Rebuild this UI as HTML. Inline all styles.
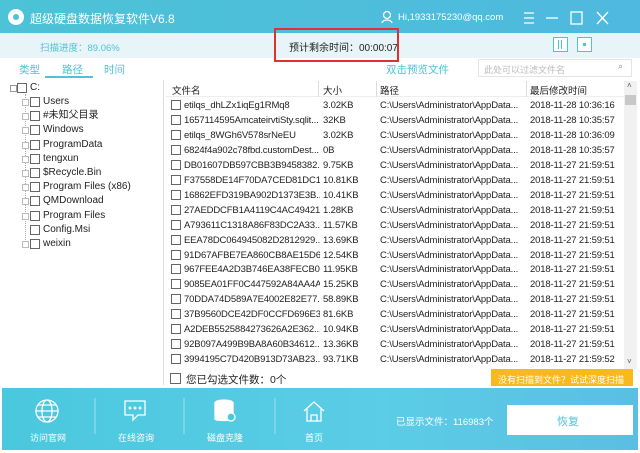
<!DOCTYPE html>
<html><head><meta charset="utf-8"><style>
*{margin:0;padding:0;box-sizing:border-box}
body{width:640px;height:453px;overflow:hidden;background:#fff;font-family:"Liberation Sans","Noto Sans CJK SC",sans-serif;font-size:11px;color:#222;position:relative}
.a{position:absolute;white-space:nowrap}
.cb{position:absolute;width:10px;height:10px;border:1px solid #666;background:#fff}
.row{position:absolute;left:168px;height:15px;width:456px;font-size:9.5px;line-height:15px;white-space:nowrap;letter-spacing:-0.15px}
.row span{position:absolute;overflow:hidden;white-space:nowrap}
.t{position:absolute;font-size:10px;line-height:14px;white-space:nowrap}
</style></head><body>
<div class="a" style="left:0;top:0;width:640px;height:33px;background:linear-gradient(90deg,#4cc3d6,#4fb9df)"></div>
<div class="a" style="left:8px;top:9px;width:16px;height:16px;border-radius:50%;background:#fff"></div>
<div class="a" style="left:13px;top:14px;width:6px;height:6px;border-radius:50%;background:#4cc3d6"></div>
<div class="a" style="left:30px;top:10px;color:#fff;font-size:12px">超级硬盘数据恢复软件V6.8</div>
<svg class="a" style="left:381px;top:10px" width="12" height="14"><circle cx="6" cy="5" r="3.5" fill="none" stroke="#fff" stroke-width="1.3"/><path d="M1 13c1-4 9-4 10 0" fill="none" stroke="#fff" stroke-width="1.3"/></svg>
<div class="a" style="left:398px;top:12px;color:#fff;font-size:9.5px">Hi,1933175230@qq.com</div>
<svg class="a" style="left:520px;top:10px" width="110" height="16" stroke="#fff" stroke-width="1.3" fill="none"><path d="M4 3h10M4 8h10M4 13h10"/><path d="M26 8h12"/><rect x="51" y="2" width="11" height="12"/><path d="M77 2l11 12M88 2l-11 12"/></svg>
<div class="a" style="left:0;top:33px;width:640px;height:25px;background:#e7f5f9"></div>
<div class="a" style="left:40px;top:40px;color:#4cc3d6;font-size:9.5px">扫描进度：89.06%</div>
<div class="a" style="left:289px;top:39px;color:#222;font-size:10px">预计剩余时间：00:00:07</div>
<div class="a" style="left:274px;top:28px;width:125px;height:34px;border:2px solid #e03030"></div>
<div class="a" style="left:553px;top:37px;width:15px;height:15px;border:1px solid #4cc3d6;background:#fff"></div>
<div class="a" style="left:558px;top:40px;width:1px;height:9px;background:#4cc3d6;box-shadow:3px 0 #4cc3d6"></div>
<div class="a" style="left:577px;top:37px;width:15px;height:15px;border:1px solid #4cc3d6;background:#fff"></div>
<div class="a" style="left:583px;top:43px;width:3px;height:3px;background:#4cc3d6"></div>
<div class="a" style="left:19px;top:62px;color:#4cc3d6;font-size:10.5px">类型</div>
<div class="a" style="left:62px;top:62px;color:#4cc3d6;font-size:10.5px">路径</div>
<div class="a" style="left:45px;top:76px;width:48px;height:2px;background:#4cc3d6"></div>
<div class="a" style="left:104px;top:62px;color:#4cc3d6;font-size:10.5px">时间</div>
<div class="a" style="left:386px;top:62px;color:#4cc3d6;font-size:10.5px">双击预览文件</div>
<div class="a" style="left:478px;top:59px;width:154px;height:18px;border:1px solid #e4e4e4"></div>
<div class="a" style="left:484px;top:63px;color:#bbb;font-size:9px">此处可以过滤文件名</div>
<div class="a" style="left:618px;top:61px;color:#888;font-size:9px">⌕</div>
<div class="a" style="left:2px;top:80px;width:162px;height:305px;border-right:1px solid #ddd"></div>
<div class="a" style="left:10px;top:85px;width:7px;height:7px;border:1px solid #999"></div>
<div class="cb" style="left:17px;top:83px"></div><div class="t" style="left:30px;top:81px">C:</div>
<div class="a" style="left:25px;top:94px;width:1px;height:150px;border-left:1px dotted #aaa"></div>
<div id="tree"></div>
<div class="a" style="left:166px;top:81px;width:458px;height:16px;border-bottom:1px solid #eee"></div>
<div class="a" style="left:318px;top:81px;width:1px;height:16px;background:#ddd"></div>
<div class="a" style="left:376px;top:81px;width:1px;height:16px;background:#ddd"></div>
<div class="a" style="left:526px;top:81px;width:1px;height:16px;background:#ddd"></div>
<div class="a" style="left:172px;top:83px;font-size:9.5px">文件名</div>
<div class="a" style="left:323px;top:83px;font-size:9.5px">大小</div>
<div class="a" style="left:380px;top:83px;font-size:9.5px">路径</div>
<div class="a" style="left:530px;top:83px;font-size:9.5px">最后修改时间</div>
<div class="a" style="left:624px;top:81px;width:13px;height:288px;background:#f1f1f1"></div>
<div class="a" style="left:625px;top:95px;width:11px;height:10px;background:#c8c8c8"></div>
<div class="a" style="left:627px;top:81px;font-size:8px;color:#555">˄</div>
<div class="a" style="left:627px;top:357px;font-size:8px;color:#555">˅</div>
<div id="rows"></div>
<div class="cb" style="left:170px;top:373px;width:11px;height:11px"></div>
<div class="a" style="left:186px;top:372px;font-size:10.5px">您已勾选文件数：0个</div>
<div class="a" style="left:491px;top:369px;width:142px;height:17px;background:#f8b91c"></div>
<div class="a" style="left:498px;top:373px;color:#fff;font-size:9px">没有扫描到文件？试试深度扫描</div>
<div class="a" style="left:2px;top:388px;width:636px;height:62px;background:linear-gradient(90deg,#4ac8de,#5bcde6 60%,#5bbee3)"></div>
<svg class="a" style="left:0;top:388px" width="400" height="62" fill="none" stroke="#fff" stroke-width="1.3">
<circle cx="47" cy="23" r="11"/><ellipse cx="47" cy="23" rx="5" ry="11"/><path d="M36 23h22M38 17h18M38 29h18"/>
<path d="M125 13h20v14h-7l-5 5v-5h-8z"/><circle cx="130" cy="20" r=".8" fill="#fff"/><circle cx="135" cy="20" r=".8" fill="#fff"/><circle cx="140" cy="20" r=".8" fill="#fff"/>
<ellipse cx="224" cy="15" rx="9" ry="3" fill="#fff"/><path d="M215 15v16c0 2 18 2 18 0V15" fill="#fff"/><circle cx="231" cy="29" r="4" fill="#4ac8de" stroke="#fff"/>
<path d="M304 23l10-9 10 9M307 21v12h14V21M311 33v-6h6v6"/>
<path d="M95 10v36M184 10v36M275 10v36" stroke="#8fdbe9"/></svg>
<div class="a" style="left:30px;top:431px;color:#fff;font-size:9px">访问官网</div>
<div class="a" style="left:118px;top:431px;color:#fff;font-size:9px">在线咨询</div>
<div class="a" style="left:207px;top:431px;color:#fff;font-size:9px">磁盘克隆</div>
<div class="a" style="left:305px;top:431px;color:#fff;font-size:9px">首页</div>
<div class="a" style="left:396px;top:414px;color:#fff;font-size:9.5px">已显示文件：116983个</div>
<div class="a" style="left:507px;top:405px;width:126px;height:30px;background:#fff"></div>
<div class="a" style="left:557px;top:413px;color:#4cc3d6;font-size:11px">恢复</div>
<script>
var t=["Users","#未知父目录","Windows","ProgramData","tengxun","$Recycle.Bin","Program Files (x86)","QMDownload","Program Files","Config.Msi","weixin"],h="";
t.forEach(function(n,i){var y=95+i*14.2;
if(i!=9)h+='<div class="a" style="left:22px;top:'+(y+4)+'px;width:7px;height:7px;border:1px solid #bbb;background:#fff"></div>';
h+='<div class="cb" style="left:30px;top:'+(y+2)+'px"></div><div class="t" style="left:43px;top:'+y+'px">'+n+'</div>'});
document.getElementById('tree').innerHTML=h;
var r=[["etilqs_dhLZx1iqEg1RMq8","3.02KB","2018-11-28 10:36:16"],["1657114595AmcateirvtiSty.sqlit...","32KB","2018-11-28 10:35:57"],["etilqs_8WGh6V578srNeEU","3.02KB","2018-11-28 10:36:09"],["6824f4a902c78fbd.customDest...","0B","2018-11-28 10:35:57"],["DB01607DB597CBB3B9458382...","9.75KB","2018-11-27 21:59:51"],["F37558DE14F70DA7CED81DC1...","10.81KB","2018-11-27 21:59:51"],["16862EFD319BA902D1373E3B...","10.41KB","2018-11-27 21:59:51"],["27AEDDCFB1A4119C4AC49421...","1.28KB","2018-11-27 21:59:51"],["A793611C1318A86F83DC2A33...","11.57KB","2018-11-27 21:59:51"],["EEA78DC064945082D2812929...","13.69KB","2018-11-27 21:59:51"],["91D67AFBE7EA860CB8AE15D6...","12.54KB","2018-11-27 21:59:51"],["967FEE4A2D3B746EA38FECB0...","11.95KB","2018-11-27 21:59:51"],["9085EA01FF0C447592A84AA4A...","15.25KB","2018-11-27 21:59:51"],["70DDA74D589A7E4002E82E77...","58.89KB","2018-11-27 21:59:51"],["37B9560DCE42DF0CCFD696E3...","81.6KB","2018-11-27 21:59:51"],["A2DEB5525884273626A2E362...","10.94KB","2018-11-27 21:59:51"],["92B097A499B9BA8A60B34612...","13.36KB","2018-11-27 21:59:51"],["3994195C7D420B913D73AB23...","93.71KB","2018-11-27 21:59:52"]];
h="";r.forEach(function(x,i){var y=98+i*14.95;
h+='<div class="row" style="top:'+y+'px"><div class="cb" style="left:3px;top:2px"></div><span style="left:16px;width:136px">'+x[0]+'</span><span style="left:155px;width:54px">'+x[1]+'</span><span style="left:212px;width:146px">C:\\Users\\Administrator\\AppData...</span><span style="left:362px;width:94px">'+x[2]+'</span></div>'});
document.getElementById('rows').innerHTML=h;
</script>
</body></html>
